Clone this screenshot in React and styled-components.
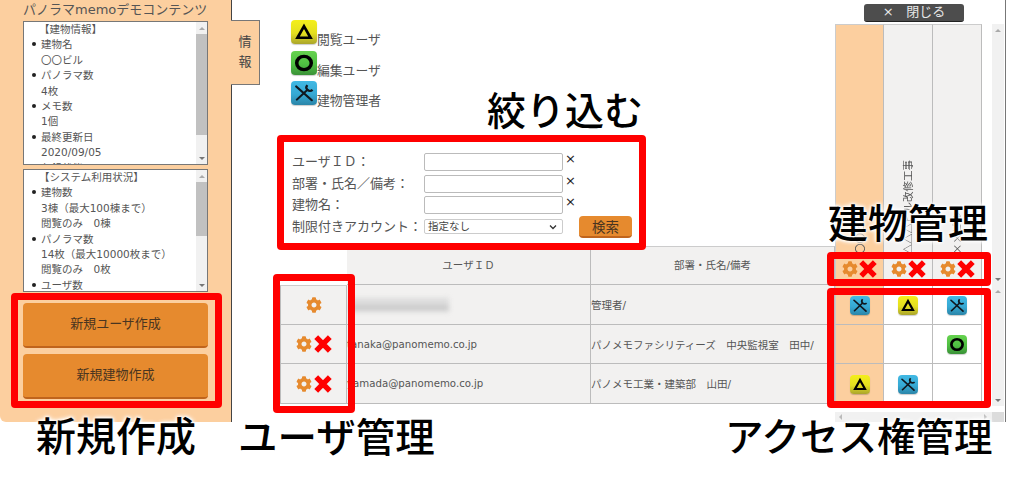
import styled, { createGlobalStyle } from "styled-components";
import { FaCog } from "react-icons/fa";

const GlobalStyle = createGlobalStyle`
  html, body {
    margin: 0;
    padding: 0;
    background: #fff;
  }
  body {
    font-family: "DejaVu Sans", "Noto Sans CJK JP", sans-serif;
    color: #4a4a4a;
    width: 1024px;
    height: 489px;
    overflow: hidden;
  }
`;

const PEACH = "#fccf9f";
const ORANGE = "#e68a2e";
const GREY_CELL = "#f2f1f0";
const LINE = "#bcbcbc";

const Page = styled.div`
  position: relative;
  width: 1024px;
  height: 489px;
  overflow: hidden;
`;

const Workspace = styled.div`
  display: flex;
  height: 422px;
  width: 1005px;
  border-right: 1px solid #777;
`;

const Sidebar = styled.aside`
  width: 208px;
  flex: none;
  background: ${PEACH};
  border-right: 1px solid #444;
  border-bottom-left-radius: 6px;
  padding-left: 23px;
  display: flex;
  flex-direction: column;
`;

const SidebarTitle = styled.div`
  font-size: 13px;
  line-height: 19px;
  height: 21px;
  white-space: nowrap;
  color: #555;
`;

const InfoBox = styled.div`
  display: flex;
  width: 185px;
  height: ${(p) => p.$height}px;
  margin-bottom: 4px;
  box-sizing: border-box;
  background: #fff;
  border: 1px solid #777;
  overflow: hidden;
`;

const InfoText = styled.div`
  flex: 1;
  overflow: hidden;
  font-size: 10.5px;
  line-height: 15.4px;
  color: #555;
`;

const InfoHeading = styled.div`
  padding-left: 15px;
  white-space: nowrap;
`;

const InfoList = styled.ul`
  margin: 0;
  padding: 0 0 0 17px;
  list-style: none;
`;

const InfoItem = styled.li`
  white-space: nowrap;
  &::before {
    content: "";
    display: inline-block;
    width: 4px;
    height: 4px;
    margin: 0 5px 2px -9px;
    border-radius: 50%;
    background: #222;
  }
`;

const Track = styled.div`
  width: 11px;
  flex: none;
  background: #f1f1f1;
  display: flex;
  flex-direction: column;
`;

const ArrowBox = styled.div`
  height: 12px;
  flex: none;
  display: flex;
  align-items: center;
  justify-content: center;
`;

const Arrow = styled.div`
  width: 0;
  height: 0;
  border-left: 3px solid transparent;
  border-right: 3px solid transparent;
  ${(p) =>
    p.$down ? "border-top: 3px solid #777;" : "border-bottom: 3px solid #aaa;"}
`;

const Thumb = styled.div`
  background: #c1c1c1;
  height: ${(p) => p.$size}px;
  flex: none;
`;

const ThumbArea = styled.div`
  flex: 1;
`;

const SideButtons = styled.div`
  margin-top: 7px;
  display: flex;
  flex-direction: column;
  gap: 6px;
`;

const SideButton = styled.button`
  width: 185px;
  height: 45px;
  box-sizing: border-box;
  border: none;
  border-bottom: 2px solid #c0641c;
  border-radius: 4px;
  background: ${ORANGE};
  font-family: inherit;
  font-size: 13px;
  color: #4a3520;
  padding: 0 0 5px;
`;

const Tab = styled.div`
  width: 29px;
  height: 65px;
  flex: none;
  margin: 20px 0 0 -1px;
  box-sizing: border-box;
  background: ${PEACH};
  border: 1px solid #777;
  border-left: none;
  font-size: 13px;
  line-height: 20px;
  color: #444;
  display: flex;
  align-items: center;
  justify-content: center;
  text-align: center;
  padding-bottom: 2px;
`;

const Main = styled.main`
  flex: 1;
`;

const Board = styled.div`
  margin-left: 20px;
  display: grid;
  grid-template-columns: 67px 244px 244px 49px 49px 49px 10px 12px;
  grid-template-rows: 24px 222px 39px 40px 39px 40px 2px 6px 10px;
`;

const TopArea = styled.div`
  grid-column: 1 / 4;
  grid-row: 1 / 3;
  padding-top: 20px;
`;

const Legend = styled.div`
  display: flex;
  flex-direction: column;
  gap: 5.5px;
  margin-left: 11px;
`;

const LegendRow = styled.div`
  display: flex;
  align-items: flex-end;
  height: 25px;
  font-size: 12.8px;
  line-height: 10px;
  color: #555;
`;

const FilterForm = styled.form`
  margin: 47px 0 0 12px;
  display: flex;
  flex-direction: column;
  gap: 3.5px;
`;

const FilterRow = styled.div`
  display: flex;
  align-items: center;
  height: 18px;
`;

const FilterLabel = styled.label`
  width: 132px;
  flex: none;
  font-size: 13px;
  line-height: 16px;
  color: #555;
  white-space: nowrap;
`;

const FilterInput = styled.input`
  width: 139px;
  height: 18px;
  box-sizing: border-box;
  border: 1px solid #bbb;
  border-radius: 2px;
  background: #fff;
  padding: 0;
`;

const FilterSelect = styled.div`
  width: 139px;
  height: 15px;
  box-sizing: border-box;
  border: 1px solid #ccc;
  border-radius: 2px;
  background: #fff;
  display: flex;
  align-items: center;
  justify-content: space-between;
  padding: 0 5px 0 3px;
  font-size: 10.5px;
  line-height: 13px;
  color: #444;
`;

const Chevron = styled.svg`
  width: 8px;
  height: 6px;
`;

const ClearMark = styled.span`
  margin: 0 0 6px 2px;
  width: 12px;
  font-size: 13px;
  line-height: 12px;
  font-weight: 500;
  color: #222;
`;

const SearchButton = styled.button`
  margin-left: 16px;
  width: 53px;
  height: 22px;
  flex: none;
  box-sizing: border-box;
  border: none;
  border-bottom: 2px solid #c0641c;
  border-radius: 4px;
  background: ${ORANGE};
  font-family: inherit;
  font-size: 13.5px;
  color: #4a3520;
  padding: 0 0 4px;
`;

const CloseSlot = styled.div`
  grid-column: 4 / 7;
  grid-row: 1;
  padding: 4px 0 0 29px;
`;

const CloseButton = styled.div`
  width: 100px;
  height: 18px;
  box-sizing: border-box;
  background: #4d4d4d;
  border-bottom: 1px solid #222;
  border-radius: 3px;
  color: #e8e8e8;
  font-size: 13px;
  line-height: 16px;
  text-align: center;
  white-space: pre;
`;

const BuildingHead = styled.div`
  grid-row: 2 / 4;
  grid-column: ${(p) => p.$col};
  background: ${(p) => (p.$active ? PEACH : GREY_CELL)};
  border-top: 1px solid #ccc;
  border-right: 1px solid ${LINE};
  border-left: ${(p) => (p.$first ? "1px solid #ccc" : "none")};
  border-bottom: 1px solid ${LINE};
  display: flex;
  flex-direction: column;
  align-items: center;
  justify-content: flex-end;
  min-width: 0;
  overflow: hidden;
`;

const BuildingName = styled.div`
  font-family: "Noto Sans CJK JP", sans-serif;
  writing-mode: vertical-rl;
  text-orientation: sideways;
  transform: rotate(180deg);
  font-size: 10.5px;
  line-height: 12px;
  color: #555;
  white-space: nowrap;
`;

const ActionPair = styled.div`
  display: flex;
  align-items: center;
  justify-content: center;
  gap: ${(p) => (p.$head ? 1 : 2)}px;
  height: ${(p) => (p.$head ? "30px" : "auto")};
  flex: none;
`;

const GearIcon = styled(FaCog)`
  width: 16px;
  height: 16px;
  color: ${ORANGE};
  flex: none;
`;

const CrossSvg = styled.svg`
  width: 18px;
  height: 18px;
  flex: none;
`;

const Cell = styled.div`
  grid-column: ${(p) => p.$col};
  grid-row: ${(p) => p.$row};
  background: ${GREY_CELL};
  border-right: 1px solid ${LINE};
  border-bottom: 1px solid ${LINE};
  border-left: ${(p) => (p.$leftEdge ? `1px solid ${LINE}` : "none")};
  border-top: ${(p) => (p.$topEdge ? "1px solid #ccc" : "none")};
  font-size: 10.5px;
  color: #555;
  display: flex;
  align-items: center;
  justify-content: ${(p) => (p.$center ? "center" : "flex-start")};
  padding-bottom: ${(p) => (p.$lift ? 3 : 0)}px;
  box-sizing: border-box;
  white-space: nowrap;
  min-width: 0;
  overflow: hidden;
`;

const Email = styled.span`
  font-size: 10.2px;
`;

const BlurredId = styled.div`
  width: 100px;
  height: 14px;
  margin-left: 2px;
  background: linear-gradient(180deg, #dcdcdc 0 60%, #c6c6c6 60% 85%, #dcdcdc 85%);
  filter: blur(2.5px);
`;

const AccessCell = styled.div`
  grid-column: ${(p) => p.$col};
  grid-row: ${(p) => p.$row};
  background: ${(p) => (p.$active ? PEACH : "#fff")};
  border-right: 1px solid ${LINE};
  border-bottom: 1px solid ${LINE};
  border-left: ${(p) => (p.$first ? "1px solid #ccc" : "none")};
  display: flex;
  align-items: center;
  justify-content: center;
  padding-top: 1px;
`;

const BadgeBox = styled.div`
  width: ${(p) => p.$w}px;
  height: ${(p) => p.$h}px;
  flex: none;
  margin-bottom: ${(p) => p.$lift || 0}px;
  border-radius: 4px;
  background: ${(p) => p.$fill};
  box-shadow: 0 1px 1px rgba(0, 0, 0, 0.2);
  svg {
    display: block;
    width: 100%;
    height: 100%;
  }
`;

const SideScroll = styled.div`
  grid-column: 8;
  grid-row: ${(p) => p.$row};
  display: flex;
  ${Track} {
    width: 12px;
  }
`;

const BottomBar = styled.div`
  grid-column: 4 / 9;
  grid-row: 9;
  background: #f1f1f1;
  display: flex;
  align-items: center;
  padding-left: 4px;
`;

const BottomArrow = styled.div`
  width: 0;
  height: 0;
  border-top: 3px solid transparent;
  border-bottom: 3px solid transparent;
  ${(p) =>
    p.$right
      ? "border-left: 3px solid #bbb; margin: 0 5px 0 auto;"
      : "border-right: 3px solid #bbb;"}
`;

const Corner = styled.div`
  width: 12px;
  height: 10px;
  background: #dcdcdc;
`;

const RedFrame = styled.div`
  position: absolute;
  left: ${(p) => p.$x}px;
  top: ${(p) => p.$y}px;
  width: ${(p) => p.$w}px;
  height: ${(p) => p.$h}px;
  box-sizing: border-box;
  border: 7px solid #f00;
  border-radius: 4px;
  pointer-events: none;
`;

const Callout = styled.div`
  position: absolute;
  left: ${(p) => p.$x}px;
  top: ${(p) => p.$y}px;
  font-family: "Noto Sans CJK JP", sans-serif;
  font-size: ${(p) => p.$size || 40}px;
  line-height: 46px;
  font-weight: 500;
  color: #000;
  white-space: nowrap;
  text-shadow: 0 0 3px #fff, 0 0 3px #fff, 0 0 5px #fff, 0 0 5px #fff;
`;

const FILLS = {
  view: "linear-gradient(180deg, #f4ef1c 0%, #e4df20 55%, #aaa52c 100%)",
  edit: "linear-gradient(180deg, #66d24f 0%, #4fbf42 55%, #3a9138 100%)",
  admin: "linear-gradient(180deg, #41b9e4 0%, #36a9d4 55%, #2b85a8 100%)",
};

function RoleBadge({ role, w = 20, h = 19, lift }) {
  return (
    <BadgeBox $w={w} $h={h} $fill={FILLS[role]} $lift={lift}>
      <svg viewBox="0 0 20 20" preserveAspectRatio="none">
        {role === "view" && (
          <path d="M10 5.2 L15 14.8 H5 Z" fill="none" stroke="#000" strokeWidth="2.2" />
        )}
        {role === "edit" && (
          <circle cx="10" cy="10" r="5.6" fill="none" stroke="#000" strokeWidth="2.7" />
        )}
        {role === "admin" && (
          <g fill="none" stroke="#101820" strokeWidth="1.7">
            <path d="M4 4.5 L16 16" strokeLinecap="round" />
            <path d="M4.5 15.5 L12.6 7.4" strokeLinecap="round" />
            <path d="M12.6 3.4 A3 3 0 0 0 12.6 7.4 A3 3 0 0 0 16.6 7.4" />
          </g>
        )}
      </svg>
    </BadgeBox>
  );
}

function ScrollBar({ size }) {
  return (
    <Track>
      <ArrowBox>
        <Arrow />
      </ArrowBox>
      <ThumbArea>{size > 0 && <Thumb $size={size} />}</ThumbArea>
      <ArrowBox>
        <Arrow $down />
      </ArrowBox>
    </Track>
  );
}

function Actions({ single, head }) {
  return (
    <ActionPair $head={head}>
      <GearIcon />
      {!single && (
        <CrossSvg viewBox="0 0 18 18">
          <path d="M2.2 2.2 L15.8 15.8 M15.8 2.2 L2.2 15.8" stroke="#f00" strokeWidth="5.4" fill="none" />
        </CrossSvg>
      )}
    </ActionPair>
  );
}

const buildingInfo = [
  ["建物名", "〇〇ビル"],
  ["パノラマ数", "4枚"],
  ["メモ数", "1個"],
  ["最終更新日", "2020/09/05"],
  ["収録状態"],
];

const usageInfo = [
  ["建物数", "3棟（最大100棟まで）", "閲覧のみ　0棟"],
  ["パノラマ数", "14枚（最大10000枚まで）", "閲覧のみ　0枚"],
  ["ユーザ数"],
];

const filterFields = ["ユーザＩＤ：", "部署・氏名／備考：", "建物名："];

const buildings = ["〇〇ビル", "△△△ビル改修工事", "××ビル"];

const users = [
  { id: null, dept: "管理者/", single: true, access: ["admin", "view", "admin"] },
  {
    id: "tanaka@panomemo.co.jp",
    dept: "パノメモファシリティーズ　中央監視室　田中/",
    access: [null, null, "edit"],
  },
  {
    id: "yamada@panomemo.co.jp",
    dept: "パノメモ工業・建築部　山田/",
    access: ["view", "admin", null],
  },
];

function InfoPanel({ title, items, height, size }) {
  return (
    <InfoBox $height={height}>
      <InfoText>
        <InfoHeading>{title}</InfoHeading>
        <InfoList>
          {items.map(([label, ...rest]) => (
            <InfoItem key={label}>
              {label}
              {rest.map((line) => (
                <span key={line}>
                  <br />
                  {line}
                </span>
              ))}
            </InfoItem>
          ))}
        </InfoList>
      </InfoText>
      <ScrollBar size={size} />
    </InfoBox>
  );
}

function UserRow({ user, row }) {
  return (
    <>
      <Cell $col="1" $row={row} $leftEdge $center $topEdge={row === 4}>
        <Actions single={user.single} />
      </Cell>
      <Cell $col="2" $row={row}>
        {user.id ? <Email>{user.id}</Email> : <BlurredId />}
      </Cell>
      <Cell $col="3" $row={row}>{user.dept}</Cell>
      {user.access.map((role, i) => (
        <AccessCell key={i} $col={i + 4} $row={row} $active={i === 0} $first={i === 0}>
          {role && <RoleBadge role={role} />}
        </AccessCell>
      ))}
    </>
  );
}

export default function App() {
  return (
    <>
      <GlobalStyle />
      <Page>
        <Workspace>
          <Sidebar>
            <SidebarTitle>パノラマmemoデモコンテンツ</SidebarTitle>
            <InfoPanel title="【建物情報】" items={buildingInfo} height={144} size={101} />
            <InfoPanel title="【システム利用状況】" items={usageInfo} height={123} size={54} />
            <SideButtons>
              <SideButton>新規ユーザ作成</SideButton>
              <SideButton>新規建物作成</SideButton>
            </SideButtons>
          </Sidebar>
          <Tab>情<br />報</Tab>
          <Main>
            <Board>
              <TopArea>
                <Legend>
                  <LegendRow><RoleBadge role="view" w={26} h={24} lift={1} />閲覧ユーザ</LegendRow>
                  <LegendRow><RoleBadge role="edit" w={26} h={24} lift={1} />編集ユーザ</LegendRow>
                  <LegendRow><RoleBadge role="admin" w={26} h={24} lift={1} />建物管理者</LegendRow>
                </Legend>
                <FilterForm>
                  {filterFields.map((label) => (
                    <FilterRow key={label}>
                      <FilterLabel>{label}</FilterLabel>
                      <FilterInput />
                      <ClearMark>×</ClearMark>
                    </FilterRow>
                  ))}
                  <FilterRow>
                    <FilterLabel>制限付きアカウント：</FilterLabel>
                    <FilterSelect>
                      指定なし
                      <Chevron viewBox="0 0 8 6">
                        <path d="M1 1.5 L4 4.5 L7 1.5" fill="none" stroke="#333" strokeWidth="1.3" />
                      </Chevron>
                    </FilterSelect>
                    <SearchButton type="button">検索</SearchButton>
                  </FilterRow>
                </FilterForm>
              </TopArea>

              <CloseSlot>
                <CloseButton>{"×   閉じる"}</CloseButton>
              </CloseSlot>

              {buildings.map((name, i) => (
                <BuildingHead key={name} $col={i + 4} $active={i === 0} $first={i === 0}>
                  <BuildingName>{name}</BuildingName>
                  <Actions head />
                </BuildingHead>
              ))}

              <SideScroll $row="2 / 4"><ScrollBar size={0} /></SideScroll>

              <Cell $col="2" $row="3" $topEdge $center $lift>ユーザＩＤ</Cell>
              <Cell $col="3" $row="3" $topEdge $center $lift>部署・氏名/備考</Cell>

              {users.map((user, r) => (
                <UserRow key={r} user={user} row={r + 4} />
              ))}

              <SideScroll $row="4 / 8"><ScrollBar size={0} /></SideScroll>

              <BottomBar>
                <BottomArrow />
                <BottomArrow $right />
                <Corner />
              </BottomBar>
            </Board>
          </Main>
        </Workspace>

        <RedFrame $x={11} $y={293} $w={211} $h={115} />
        <RedFrame $x={273} $y={274} $w={82} $h={139} />
        <RedFrame $x={277} $y={135} $w={369} $h={115} />
        <RedFrame $x={827} $y={252} $w={164} $h={34} />
        <RedFrame $x={827} $y={288} $w={164} $h={120} />

        <Callout $x={36} $y={411}>新規作成</Callout>
        <Callout $x={238} $y={412} $size={39.5}>ユーザ管理</Callout>
        <Callout $x={487} $y={85} $size={39}>絞り込む</Callout>
        <Callout $x={828} $y={198}>建物管理</Callout>
        <Callout $x={725} $y={411} $size={38.5}>アクセス権管理</Callout>
      </Page>
    </>
  );
}
